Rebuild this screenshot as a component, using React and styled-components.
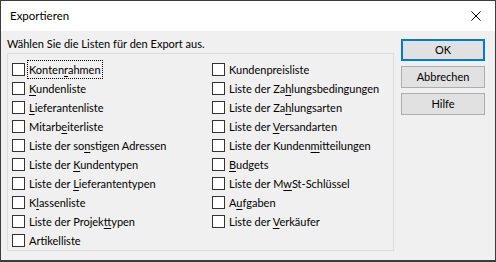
import styled, { createGlobalStyle } from 'styled-components';

const GlobalStyle = createGlobalStyle`
	html, body {
		margin: 0;
		padding: 0;
		background: #ffffff;
	}
	body {
		font-family: Lato, "Noto Sans", sans-serif;
		font-size: 11px;
		color: #000000;
	}
`;

const leftItems = [
	{ pre: 'Konten', key: 'r', post: 'ahmen', focused: true },
	{ pre: '', key: 'K', post: 'undenliste' },
	{ pre: '', key: 'L', post: 'ieferantenliste' },
	{ pre: 'Mitarb', key: 'e', post: 'iterliste' },
	{ pre: 'Liste der so', key: 'n', post: 'stigen Adressen' },
	{ pre: 'Liste der ', key: 'K', post: 'undentypen' },
	{ pre: 'Liste der ', key: 'L', post: 'ieferantentypen' },
	{ pre: 'K', key: 'l', post: 'assenliste' },
	{ pre: 'Liste der Projek', key: 't', post: 'typen' },
	{ pre: 'Artikelliste', key: '', post: '' },
];

const rightItems = [
	{ pre: 'Kundenpreisliste', key: '', post: '' },
	{ pre: 'Liste der Za', key: 'h', post: 'lungsbedingungen' },
	{ pre: 'Liste der Za', key: 'h', post: 'lungsarten' },
	{ pre: 'Liste der ', key: 'V', post: 'ersandarten' },
	{ pre: 'Liste der Kunden', key: 'm', post: 'itteilungen' },
	{ pre: '', key: 'B', post: 'udgets' },
	{ pre: 'Liste der M', key: 'w', post: 'St-Schlüssel' },
	{ pre: 'A', key: 'u', post: 'fgaben' },
	{ pre: 'Liste der ', key: 'V', post: 'erkäufer' },
];

export default function App() {
	return (
		<>
			<GlobalStyle />
			<Window>
				<TitleBar>
					<Title>Exportieren</Title>
					<CloseButton aria-label="Schließen">
						<svg width="10" height="10" viewBox="0 0 10 10">
							<path d="M0.5 0.5 L9.5 9.5 M9.5 0.5 L0.5 9.5" stroke="#000" strokeWidth="1" fill="none" />
						</svg>
					</CloseButton>
				</TitleBar>
				<Body>
					<Main>
						<Prompt>Wählen Sie die Listen für den Export aus.</Prompt>
						<ListBox>
							<Grid>
								{leftItems.map((it, i) => (
									<CheckRow key={'l' + i} item={it} col={1} />
								))}
								{rightItems.map((it, i) => (
									<CheckRow key={'r' + i} item={it} col={2} />
								))}
							</Grid>
						</ListBox>
					</Main>
					<Buttons>
						<Button $default>OK</Button>
						<Button>Abbrechen</Button>
						<Button>Hilfe</Button>
					</Buttons>
				</Body>
			</Window>
		</>
	);
}

function CheckRow({ item, col }) {
	return (
		<Row $col={col}>
			<Box />
			<Label $focused={item.focused}>
				{item.pre}
				{item.key && <Key>{item.key}</Key>}
				{item.post}
			</Label>
		</Row>
	);
}

const Window = styled.div`
	width: 496px;
	height: 262px;
	box-sizing: border-box;
	border: 1px solid #3c3c3c;
	border-bottom-width: 2px;
	background: #f0f0f0;
	display: flex;
	flex-direction: column;
`;

const TitleBar = styled.div`
	height: 30px;
	background: #ffffff;
	display: flex;
	align-items: center;
	justify-content: space-between;
	padding-left: 9px;
	padding-right: 14px;
`;

const Title = styled.span`
	font-size: 11.5px;
	line-height: 16px;
	margin-top: -1px;
`;

const CloseButton = styled.div`
	width: 10px;
	height: 10px;
	display: flex;
	margin-top: -1px;
`;

const Body = styled.div`
	flex: 1;
	display: flex;
	padding-left: 6px;
`;

const Main = styled.div`
	display: flex;
	flex-direction: column;
	padding-top: 5px;
`;

const Prompt = styled.div`
	line-height: 16px;
	height: 16px;
	margin-bottom: 1px;
`;

const ListBox = styled.div`
	width: 387px;
	height: 198px;
	box-sizing: border-box;
	border: 1px solid #dcdcdc;
	padding: 6px 0 0 4px;
`;

const Grid = styled.div`
	display: grid;
	grid-template-columns: 200px 1fr;
	grid-template-rows: repeat(10, 19px);
	grid-auto-flow: column;
`;

const Row = styled.div`
	display: flex;
	align-items: center;
	grid-column: ${(p) => p.$col};
`;

const Box = styled.span`
	width: 13px;
	height: 13px;
	box-sizing: border-box;
	border: 1px solid #333333;
	background: #ffffff;
	flex: none;
	margin-right: 2px;
`;

const Label = styled.span`
	line-height: 17px;
	padding: 0 1px;
	border: 1px dotted ${(p) => (p.$focused ? '#000000' : 'transparent')};
	white-space: nowrap;
`;

const Key = styled.span`
	text-decoration: underline;
	text-underline-offset: 2px;
`;

const Buttons = styled.div`
	display: flex;
	flex-direction: column;
	gap: 5px;
	margin-left: 7px;
	padding-top: 8px;
`;

const Button = styled.button`
	width: 84px;
	height: 22px;
	box-sizing: border-box;
	background: #e1e1e1;
	border: ${(p) => (p.$default ? '2px solid #0078d7' : '1px solid #adadad')};
	font-family: inherit;
	font-size: 11px;
	color: #000000;
	padding: 0;
	line-height: 16px;
`;
